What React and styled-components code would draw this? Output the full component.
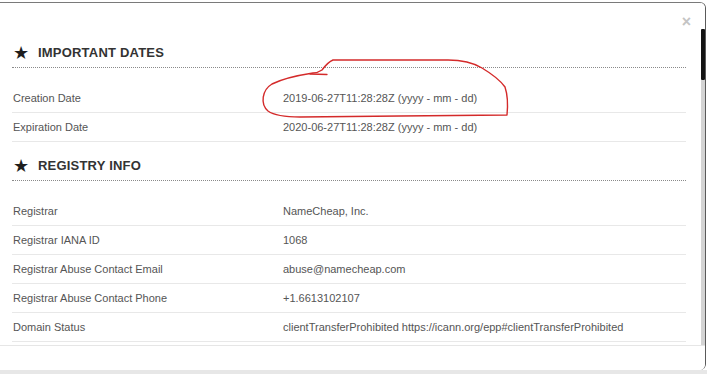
import React from "react";
import styled, { createGlobalStyle } from "styled-components";

const Global = createGlobalStyle`
  html, body {
    margin: 0;
    padding: 0;
    background: #ffffff;
    font-family: "Liberation Sans", Arial, sans-serif;
  }
  #root { width: 707px; height: 374px; overflow: hidden; }
`;

const Page = styled.div`
  position: relative;
  width: 707px;
  height: 374px;
  padding-top: 2px;
  box-sizing: border-box;
  background: linear-gradient(to bottom, #ffffff 0, #ffffff 370px, #e7e7e7 370px);
`;

const Modal = styled.div`
  width: 706px;
  height: 368px;
  box-sizing: border-box;
  background: #fff;
  border-top: 1px solid #7a7a7a;
  border-right: 1px solid #5a5a5a;
  border-radius: 0 6px 6px 0;
  display: flex;
  flex-direction: column;
  overflow: hidden;
`;

const BodyArea = styled.div`
  height: 342px;
  display: flex;
  flex-direction: row;
  overflow: hidden;
`;

const Content = styled.div`
  flex: 1;
  padding: 0 15px 0 12px;
  display: flex;
  flex-direction: column;
`;

const CloseBar = styled.div`
  height: 26px;
  box-sizing: border-box;
  display: flex;
  justify-content: flex-end;
  padding: 13px 0 0 0;
  margin-right: -5px;
`;

const Close = styled.span`
  font-family: "Liberation Sans", Arial, sans-serif;
  font-size: 16px;
  line-height: 12px;
  font-weight: bold;
  color: #c4c4c4;
`;

const SectionHeader = styled.div`
  height: 39px;
  box-sizing: border-box;
  padding-top: 16px;
  display: flex;
  align-items: flex-start;
  border-bottom: 1px dotted #8a8a8a;
`;

const Star = styled.span`
  width: 26px;
  margin-left: 1px;
  margin-right: -1px;
  font-family: "DejaVu Sans", sans-serif;
  font-size: 18px;
  line-height: 16px;
  color: #1e1e1e;
`;

const Title = styled.span`
  font-size: 13px;
  line-height: 16px;
  font-weight: bold;
  color: #333;
  letter-spacing: 0.2px;
`;

const Rows = styled.div`
  margin-top: 16px;
  display: flex;
  flex-direction: column;
`;

const Row = styled.div`
  height: 29px;
  box-sizing: border-box;
  display: grid;
  grid-template-columns: 270px 1fr;
  align-items: center;
  border-bottom: 1px solid #e8e8e8;
  font-size: 11px;
  color: #555;
`;

const Cell = styled.span`
  padding-left: 1px;
  white-space: nowrap;
`;

const ScrollTrack = styled.div`
  width: 4px;
  padding-top: 26px;
  display: flex;
  flex-direction: column;
  background: #fff;
`;

const Thumb = styled.div`
  height: 51px;
  background: #141414;
  border-radius: 1px;
`;

const TrackRest = styled.div`
  flex: 1;
  background: #d4d4d4;
`;

const Footer = styled.div`
  flex: 1;
  border-top: 1px solid #e6e6e6;
  background: #fff;
`;

const Annotation = styled.svg`
  position: absolute;
  left: 0;
  top: 0;
  pointer-events: none;
`;

const sections = [
  {
    title: "IMPORTANT DATES",
    rows: [
      ["Creation Date", "2019-06-27T11:28:28Z (yyyy - mm - dd)"],
      ["Expiration Date", "2020-06-27T11:28:28Z (yyyy - mm - dd)"],
    ],
  },
  {
    title: "REGISTRY INFO",
    rows: [
      ["Registrar", "NameCheap, Inc."],
      ["Registrar IANA ID", "1068"],
      ["Registrar Abuse Contact Email", "abuse@namecheap.com"],
      ["Registrar Abuse Contact Phone", "+1.6613102107"],
      [
        "Domain Status",
        "clientTransferProhibited https://icann.org/epp#clientTransferProhibited",
      ],
    ],
  },
];

export default function App() {
  return (
    <Page>
      <Global />
      <Modal>
        <BodyArea>
          <Content>
            <CloseBar>
              <Close>×</Close>
            </CloseBar>
            {sections.map((s) => (
              <React.Fragment key={s.title}>
                <SectionHeader>
                  <Star>★</Star>
                  <Title>{s.title}</Title>
                </SectionHeader>
                <Rows>
                  {s.rows.map(([k, v]) => (
                    <Row key={k}>
                      <Cell>{k}</Cell>
                      <Cell>{v}</Cell>
                    </Row>
                  ))}
                </Rows>
              </React.Fragment>
            ))}
          </Content>
          <ScrollTrack>
            <Thumb />
            <TrackRest />
          </ScrollTrack>
        </BodyArea>
        <Footer />
      </Modal>
      <Annotation width="707" height="374" viewBox="0 0 707 374">
        <path
          d="M313,73 C300,75 284,78 272,84 C262,90 260,104 268,111 C275,116 286,117 300,117 L400,116 L507,115 C508,105 507,93 505,87 C500,80 492,74 482,68 C472,62 458,60 448,60 L333,60 C328,62 325,66 322,70 C319,72 316,73 313,73"
          fill="none"
          stroke="#d42a2a"
          strokeWidth="1.4"
          strokeLinejoin="round"
          strokeLinecap="round"
        />
        <path
          d="M310,74 L327,74.5"
          fill="none"
          stroke="#d42a2a"
          strokeWidth="1.3"
          strokeLinecap="round"
        />
      </Annotation>
    </Page>
  );
}
